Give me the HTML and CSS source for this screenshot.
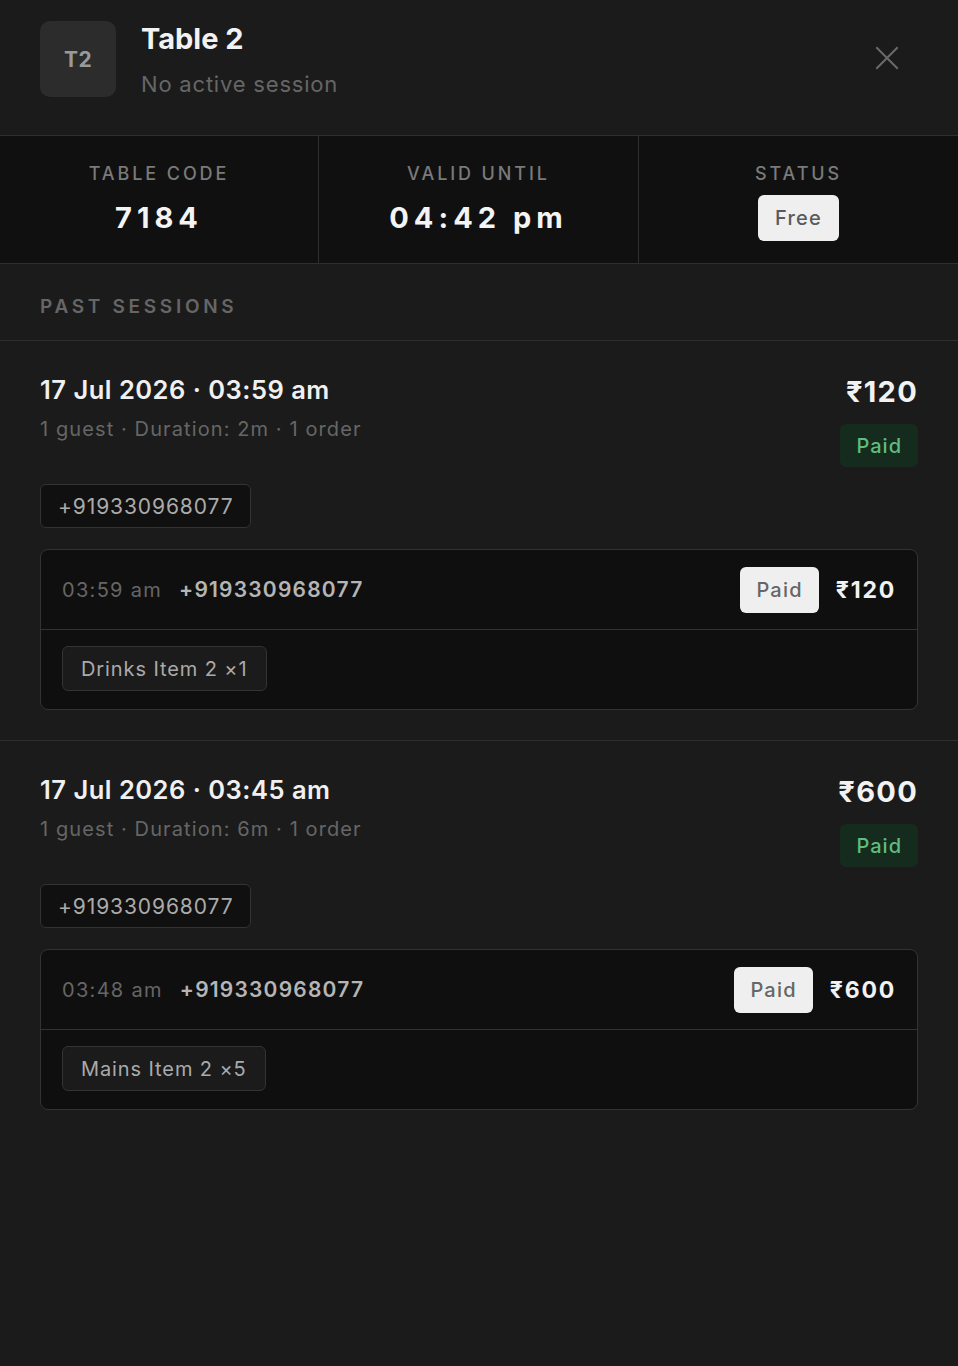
FILE: index.html
```html
<!DOCTYPE html>
<html lang="en">
<head>
<meta charset="utf-8">
<title>Table 2</title>
<link rel="stylesheet" href="styles.css">
</head>
<body>
<div class="panel">
  <header class="head">
    <div class="avatar">T2</div>
    <div class="head-text">
      <div class="title">Table 2</div>
      <div class="subtitle">No active session</div>
    </div>
    <button class="close" aria-label="Close">
      <svg width="24" height="24" viewBox="0 0 24 24" fill="none" stroke="#6a6a6a" stroke-width="2" stroke-linecap="square"><path d="M2 2L22 22M22 2L2 22"/></svg>
    </button>
  </header>

  <section class="stats">
    <div class="stat">
      <div class="stat-label">TABLE CODE</div>
      <div class="stat-value">7184</div>
    </div>
    <div class="stat">
      <div class="stat-label">VALID UNTIL</div>
      <div class="stat-value">04:42 pm</div>
    </div>
    <div class="stat">
      <div class="stat-label">STATUS</div>
      <div class="badge-light">Free</div>
    </div>
  </section>

  <div class="section-label">PAST SESSIONS</div>

  <section class="session">
    <div class="session-top">
      <div class="session-info">
        <div class="session-title">17 Jul 2026 · 03:59 am</div>
        <div class="session-meta">1 guest · Duration: 2m · 1 order</div>
      </div>
      <div class="session-side">
        <div class="session-amount">₹120</div>
        <div class="badge-green">Paid</div>
      </div>
    </div>
    <div class="phone-chip">+919330968077</div>
    <div class="order">
      <div class="order-head">
        <span class="order-time">03:59 am</span>
        <span class="order-phone">+919330968077</span>
        <span class="order-spacer"></span>
        <span class="badge-light order-badge">Paid</span>
        <span class="order-amount">₹120</span>
      </div>
      <div class="order-items">
        <span class="item-chip">Drinks Item 2 ×1</span>
      </div>
    </div>
  </section>

  <section class="session">
    <div class="session-top">
      <div class="session-info">
        <div class="session-title">17 Jul 2026 · 03:45 am</div>
        <div class="session-meta">1 guest · Duration: 6m · 1 order</div>
      </div>
      <div class="session-side">
        <div class="session-amount">₹600</div>
        <div class="badge-green">Paid</div>
      </div>
    </div>
    <div class="phone-chip">+919330968077</div>
    <div class="order">
      <div class="order-head">
        <span class="order-time">03:48 am</span>
        <span class="order-phone">+919330968077</span>
        <span class="order-spacer"></span>
        <span class="badge-light order-badge">Paid</span>
        <span class="order-amount">₹600</span>
      </div>
      <div class="order-items">
        <span class="item-chip">Mains Item 2 ×5</span>
      </div>
    </div>
  </section>
</div>
</body>
</html>
```

FILE: styles.css
```css
* { box-sizing: border-box; }
html, body {
  margin: 0;
  padding: 0;
  background: #1b1b1b;
  font-family: Inter, "Noto Sans", "Liberation Sans", sans-serif;
  color: #f0f0f0;
}
.panel {
  min-height: 1366px;
  background: #1b1b1b;
}

/* header */
.head {
  height: 136px;
  display: flex;
  align-items: flex-start;
  padding: 21px 40px 0 40px;
  border-bottom: 1px solid #2f2f2f;
}
.avatar {
  width: 76px;
  height: 76px;
  border-radius: 10px;
  background: #2c2c2c;
  color: #9a9a9a;
  font-weight: 700;
  font-size: 21px;
  letter-spacing: 0.5px;
  display: flex;
  align-items: center;
  justify-content: center;
  flex-shrink: 0;
}
.head-text {
  margin-left: 25px;
  flex: 1;
}
.title {
  font-size: 29px;
  font-weight: 700;
  line-height: 36px;
  color: #f2f2f2;
}
.subtitle {
  margin-top: 13px;
  font-size: 22px;
  line-height: 28px;
  letter-spacing: 0.8px;
  color: #666;
}
.close {
  background: none;
  border: 0;
  padding: 0;
  margin: 25px 19px 0 0;
  width: 24px;
  height: 24px;
  cursor: pointer;
}
.close svg { display: block; }

/* stats */
.stats {
  display: grid;
  grid-template-columns: 319px 320px 1fr;
  background: #101010;
  border-bottom: 1px solid #2f2f2f;
  height: 128px;
}
.stat {
  display: flex;
  flex-direction: column;
  align-items: center;
  padding-top: 27px;
  border-right: 1px solid #2f2f2f;
}
.stat:last-child { border-right: 0; }
.stat-label {
  font-size: 18px;
  line-height: 22px;
  letter-spacing: 2.9px;
  color: #7a7a7a;
  font-weight: 500;
}
.stat-value {
  margin-top: 16px;
  font-size: 29px;
  line-height: 34px;
  font-weight: 700;
  letter-spacing: 5px;
  color: #f4f4f4;
}
.badge-light {
  display: inline-flex;
  align-items: center;
  justify-content: center;
  background: #efefef;
  color: #5a5a5a;
  font-size: 20px;
  font-weight: 500;
  border-radius: 6px;
  height: 46px;
  padding: 0 17px;
  letter-spacing: 1.2px;
}
.stat .badge-light { margin-top: 10px; }

/* section label */
.section-label {
  height: 77px;
  padding: 31px 40px 0;
  font-size: 19px;
  line-height: 24px;
  letter-spacing: 3.7px;
  font-weight: 600;
  color: #666;
  border-bottom: 1px solid #2f2f2f;
}

/* session */
.session {
  padding: 33px 40px 30px;
  border-bottom: 1px solid #2f2f2f;
}
.session:last-child { border-bottom: 0; }
.session-top {
  display: flex;
  justify-content: space-between;
  align-items: flex-start;
}
.session-title {
  font-size: 25.5px;
  line-height: 32px;
  font-weight: 600;
  letter-spacing: 0.5px;
  color: #f0f0f0;
}
.session-meta {
  margin-top: 10px;
  font-size: 20px;
  line-height: 26px;
  color: #666;
  letter-spacing: 1.1px;
}
.session-side {
  display: flex;
  flex-direction: column;
  align-items: flex-end;
}
.session-amount {
  font-size: 29px;
  line-height: 36px;
  font-weight: 700;
  letter-spacing: 1.3px;
  color: #f2f2f2;
}
.badge-green {
  margin-top: 14px;
  height: 43px;
  padding: 0 16px;
  display: inline-flex;
  align-items: center;
  background: #152b1e;
  color: #5fbd7d;
  font-size: 20px;
  font-weight: 500;
  border-radius: 6px;
  letter-spacing: 1px;
}
.phone-chip {
  display: inline-flex;
  align-items: center;
  margin-top: 17px;
  height: 44px;
  padding: 0 17px;
  background: #101010;
  border: 1px solid #333;
  border-radius: 6px;
  font-size: 21px;
  letter-spacing: 0.9px;
  color: #ababab;
}
.order {
  margin-top: 21px;
  background: #0f0f0f;
  border: 1px solid #333;
  border-radius: 8px;
  overflow: hidden;
}
.order-head {
  height: 80px;
  display: flex;
  align-items: center;
  padding: 0 21px;
  border-bottom: 1px solid #333;
}
.order-time {
  font-size: 20px;
  letter-spacing: 1.3px;
  color: #666;
}
.order-phone {
  margin-left: 17px;
  font-size: 21px;
  font-weight: 600;
  letter-spacing: 1.2px;
  color: #b5b5b5;
}
.order-spacer { flex: 1; }
.order-badge {
  color: #666;
  padding: 0 16px;
}
.order-amount {
  margin-left: 17px;
  font-size: 23px;
  font-weight: 700;
  letter-spacing: 1.8px;
  color: #f2f2f2;
}
.order-items {
  height: 79px;
  padding: 16px 21px 0;
}
.item-chip {
  display: inline-flex;
  align-items: center;
  height: 45px;
  padding: 0 18px;
  background: #1b1b1b;
  border: 1px solid #333;
  border-radius: 6px;
  font-size: 20px;
  letter-spacing: 0.9px;
  color: #aaa;
}
```
